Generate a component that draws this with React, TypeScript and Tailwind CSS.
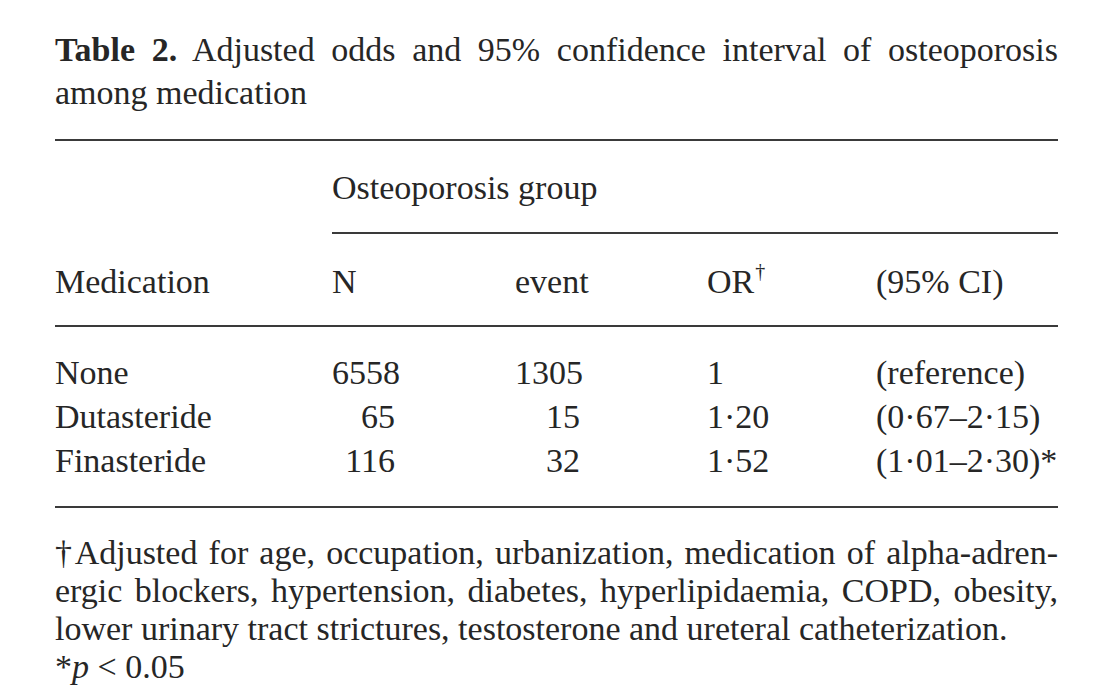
import React from "react";

const serif = { fontFamily: '"Liberation Serif", "DejaVu Serif", serif' };

function Rule({ className = "" }: { className?: string }) {
  return <div className={"h-[2px] bg-[#3a3a3a] " + className} />;
}

const rows = [
  { med: "None", n: "6558", ev: "1305", or: "1", ci: "(reference)" },
  { med: "Dutasteride", n: "65", ev: "15", or: "1·20", ci: "(0·67–2·15)" },
  { med: "Finasteride", n: "116", ev: "32", or: "1·52", ci: "(1·01–2·30)*" },
];

export default function App() {
  return (
    <div
      className="w-[1101px] h-[690px] overflow-hidden bg-white pl-[55px] pr-[43px] text-[34px] text-[#262626]"
      style={serif}
    >
      <div className="pt-[28px] leading-[43px]">
        <div className="text-justify [text-align-last:justify]">
          <span className="font-bold">Table 2.</span> Adjusted odds and 95% confidence interval of osteoporosis
        </div>
        <div>among medication</div>
      </div>
      <Rule className="mt-[25px]" />
      <div className="h-[91px] flex items-center pl-[277px] pt-[2px]">Osteoporosis group</div>
      <Rule className="ml-[277px]" />
      <div className="h-[91px] flex items-center pt-[4px]">
        <div className="w-[277px]">Medication</div>
        <div className="w-[183px]">N</div>
        <div className="w-[192px]">event</div>
        <div className="w-[169px] flex items-start">
          OR<span className="text-[20px] leading-none mt-[5px] ml-[1px]">†</span>
        </div>
        <div>(95% CI)</div>
      </div>
      <Rule />
      <div className="pt-[24px] pb-[23px] leading-[44px]">
        {rows.map((r) => (
          <div key={r.med} className="flex">
            <div className="w-[277px]">{r.med}</div>
            <div className="w-[183px]">
              <div className="w-[63px] text-right">{r.n}</div>
            </div>
            <div className="w-[192px]">
              <div className="w-[65px] text-right">{r.ev}</div>
            </div>
            <div className="w-[169px]">{r.or}</div>
            <div>{r.ci}</div>
          </div>
        ))}
      </div>
      <Rule />
      <div className="pt-[26px] leading-[38px]">
        <div className="text-justify [text-align-last:justify]">
          †Adjusted for age, occupation, urbanization, medication of alpha-adren-
        </div>
        <div className="text-justify [text-align-last:justify]">
          ergic blockers, hypertension, diabetes, hyperlipidaemia, COPD, obesity,
        </div>
        <div>lower urinary tract strictures, testosterone and ureteral catheterization.</div>
        <div>
          *<span className="italic">p</span> &lt; 0.05
        </div>
      </div>
    </div>
  );
}
